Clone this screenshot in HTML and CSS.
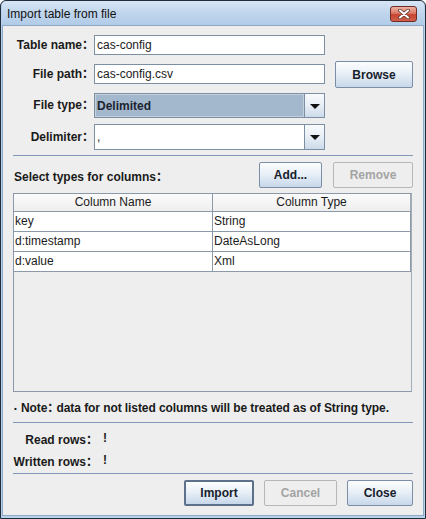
FILE: index.html
```html
<!DOCTYPE html>
<html>
<head>
<meta charset="utf-8">
<link rel="stylesheet" href="styles.css">
</head>
<body>
<div class="window">
  <div class="titlebar">
    <span class="title">Import table from file</span>
    <div class="close">
      <svg width="14" height="10" viewBox="0 0 14 10"><path d="M3 1.5 L11 8.5 M11 1.5 L3 8.5" stroke="#5a3a36" stroke-width="3.6" stroke-linecap="round"/><path d="M3 1.5 L11 8.5 M11 1.5 L3 8.5" stroke="#ffffff" stroke-width="2" stroke-linecap="round"/></svg>
    </div>
  </div>
  <div class="content">
    <div class="form">
      <div class="lbl row1">Table name：</div>
      <div class="field row1">cas-config</div>
      <div></div>

      <div class="lbl row2">File path：</div>
      <div class="field row2">cas-config.csv</div>
      <div class="btn browse">Browse</div>

      <div class="lbl row3">File type：</div>
      <div class="combo selected row3">
        <div class="val"><span>Delimited</span></div>
        <div class="arrow"><span class="tri"></span></div>
      </div>
      <div></div>

      <div class="lbl row4">Delimiter：</div>
      <div class="combo row4">
        <div class="val"><span>,</span></div>
        <div class="arrow"><span class="tri"></span></div>
      </div>
      <div></div>
    </div>

    <div class="sep sep1"></div>

    <div class="select-row">
      <span class="lbl">Select types for columns：</span>
      <div class="btn add">Add...</div>
      <div class="btn remove disabled">Remove</div>
    </div>

    <div class="table">
      <div class="thead">
        <div class="th">Column Name</div>
        <div class="th">Column Type</div>
      </div>
      <div class="tr"><div class="td">key</div><div class="td">String</div></div>
      <div class="tr"><div class="td">d:timestamp</div><div class="td">DateAsLong</div></div>
      <div class="tr"><div class="td">d:value</div><div class="td">Xml</div></div>
    </div>

    <div class="note"><span class="bullet">•</span>Note： data for not listed columns will be treated as of String type.</div>

    <div class="sep sep2"></div>

    <div class="stats">
      <div class="lbl">Read rows：</div><div class="val">!</div>
      <div class="lbl">Written rows：</div><div class="val">!</div>
    </div>

    <div class="sep sep3"></div>

    <div class="actions">
      <div class="btn import focus">Import</div>
      <div class="btn cancel disabled">Cancel</div>
      <div class="btn closebtn">Close</div>
    </div>
  </div>
</div>
</body>
</html>
```

FILE: styles.css
```css
* { box-sizing: border-box; }
html, body { margin: 0; padding: 0; }
body {
  width: 426px;
  height: 519px;
  overflow: hidden;
  background: #ffffff;
  font-family: "Liberation Sans", "Noto Sans CJK SC", sans-serif;
  font-size: 12px;
  color: #1b1b1b;
  font-feature-settings: "halt";
}
.window {
  width: 426px;
  height: 519px;
  border: 1px solid #1f2c3a;
  border-radius: 6px 6px 0 0;
  background: #b9d2ec;
  padding: 0 1px 2px 1px;
  display: flex;
  flex-direction: column;
}
.titlebar {
  height: 24px;
  flex: none;
  display: flex;
  align-items: center;
  padding: 1px 7px 0 5px;
  border-radius: 5px 5px 0 0;
  background: linear-gradient(#d8e6f5, #c4d8ee 40%, #b1cbe7);
}
.title {
  font-size: 12px;
  color: #111111;
}
.close {
  margin-left: auto;
  width: 27px;
  height: 16px;
  border: 1px solid #6e2c25;
  border-radius: 3px;
  background: linear-gradient(#eeb2a4, #db7766 45%, #c7432f 55%, #d0604c);
  display: flex;
  align-items: center;
  justify-content: center;
}
.close svg { display: block; }

.content {
  flex: 1;
  background: #eeeeee;
  border: 1px solid #8ea8c8;
  padding: 9px 10px 0 10px;
  display: flex;
  flex-direction: column;
}
.lbl {
  font-weight: bold;
  color: #1a1a1a;
  white-space: nowrap;
}

.form {
  display: grid;
  grid-template-columns: 81px 231px 1fr;
  grid-template-rows: 26px 32px 31px 26px;
}
.form .lbl { text-align: right; padding-right: 6px; }
.lbl.row1 { line-height: 20px; }
.lbl.row2 { line-height: 20px; margin-top: 3px; }
.lbl.row3 { line-height: 25px; }
.lbl.row4 { line-height: 26px; }

.field {
  height: 20px;
  border: 1px solid #7c8fa3;
  background: #ffffff;
  padding-left: 2px;
  line-height: 18px;
  color: #1b1b1b;
}
.field.row2 { margin-top: 3px; }

.combo {
  display: flex;
  border: 1px solid #7c8fa3;
  background: #ffffff;
}
.combo.row3 { height: 25px; }
.combo.row4 { height: 26px; }
.combo .val {
  flex: 1;
  display: flex;
  align-items: center;
  padding-left: 2px;
  color: #1b1b1b;
}
.combo.selected .val {
  background: #a3b8cd;
  border: 1px solid #c3d1df;
  font-weight: bold;
  padding-left: 1px;
  color: #1c2430;
}
.combo .arrow {
  width: 20px;
  border-left: 1px solid #7c8fa3;
  background: linear-gradient(#f9fbfd, #e7eef6 50%, #cddbea);
  display: flex;
  align-items: center;
  justify-content: center;
}
.tri {
  width: 0;
  height: 0;
  border-left: 5px solid transparent;
  border-right: 5px solid transparent;
  border-top: 5px solid #111111;
  margin-top: 1px;
}

.btn {
  border: 1px solid #7a8ea6;
  border-radius: 2px;
  background: linear-gradient(#fcfdfe, #e9f0f7 45%, #c7d7ea);
  font-weight: bold;
  color: #17212d;
  display: flex;
  align-items: center;
  justify-content: center;
  height: 26px;
}
.btn.disabled {
  background: #eeeeee;
  border-color: #b6b6b6;
  color: #a4a4a4;
}
.btn.focus {
  border: 2px solid #5d718b;
}
.browse {
  justify-self: end;
  width: 78px;
  height: 27px;
}

.sep {
  height: 1px;
  flex: none;
  background: #8195b7;
}
.sep1 { margin-top: 5px; }

.select-row {
  display: flex;
  align-items: center;
  margin-top: 6px;
  height: 26px;
}
.select-row .lbl { margin-left: 1px; margin-right: auto; }
.add { width: 63px; }
.remove { width: 80px; margin-left: 11px; }

.table {
  margin-top: 5px;
  width: 399px;
  height: 199px;
  flex: none;
  border: 1px solid #8c99a8;
  border-right-color: #a3adb8;
  background: #eeeeee;
}
.thead, .tr {
  display: grid;
  grid-template-columns: 199px 1fr;
}
.th {
  height: 18px;
  line-height: 17px;
  text-align: center;
  background: linear-gradient(#fbfbfb, #eeeeee);
  border-bottom: 1px solid #8c99a8;
  border-right: 1px solid #8c99a8;
  color: #1b1b1b;
}
.th:last-child { border-right: 1px solid #a0a8b2; }
.td {
  height: 20px;
  line-height: 19px;
  padding-left: 1px;
  background: #ffffff;
  border-bottom: 1px solid #8c99a8;
  border-right: 1px solid #8c99a8;
  color: #1b1b1b;
}

.note {
  margin-top: 8px;
  line-height: 16px;
  font-weight: bold;
  white-space: nowrap;
  color: #1a1a1a;
  letter-spacing: -0.08px;
}
.bullet {
  font-size: 8px;
  display: inline-block;
  width: 7px;
  margin-left: 1px;
  vertical-align: 1px;
}
.sep2 { margin-top: 5px; }

.stats {
  display: grid;
  grid-template-columns: 79px 1fr;
  column-gap: 11px;
  margin-top: 4px;
  grid-auto-rows: 22px;
  align-items: center;
}
.stats .lbl { text-align: right; }
.stats .val { font-weight: bold; }
.sep3 { margin-top: 2px; }

.actions {
  display: flex;
  justify-content: flex-end;
  gap: 10px;
  margin-top: 6px;
}
.import { width: 70px; }
.cancel { width: 73px; }
.closebtn { width: 66px; }
```
